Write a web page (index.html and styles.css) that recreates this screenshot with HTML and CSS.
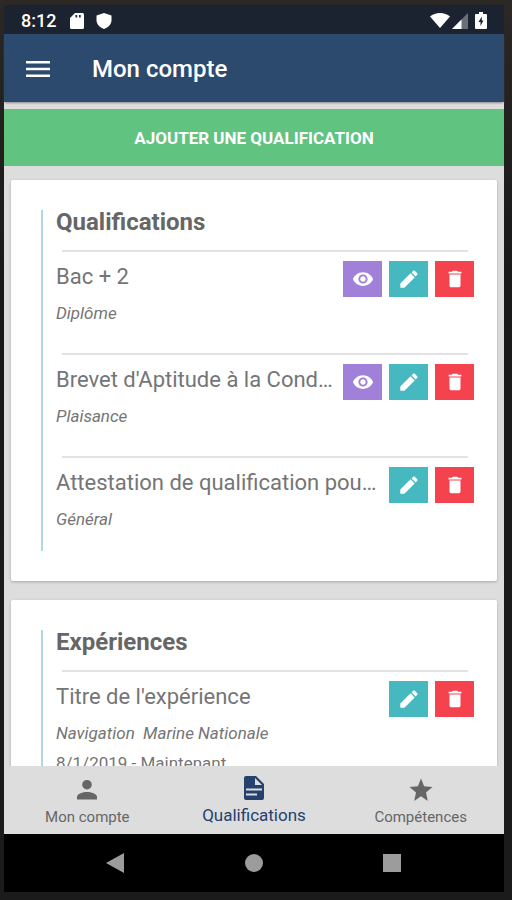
FILE: index.html
```html
<!DOCTYPE html>
<html lang="fr">
<head>
<meta charset="utf-8">
<meta name="viewport" content="width=device-width, initial-scale=1">
<title>Mon compte</title>
<link rel="stylesheet" href="styles.css">
</head>
<body>
<svg class="sprite" aria-hidden="true">
  <symbol id="eye" viewBox="0 0 24 24"><path d="M12 4.500C7 4.500 2.730 7.610 1 12c1.730 4.390 6 7.500 11 7.500s9.270-3.110 11-7.500c-1.730-4.390-6-7.500-11-7.500zM12 17c-2.760 0-5-2.240-5-5s2.240-5 5-5 5 2.240 5 5-2.240 5-5 5zm0-8c-1.660 0-3 1.340-3 3s1.340 3 3 3 3-1.340 3-3-1.340-3-3-3z"/></symbol>
  <symbol id="pencil" viewBox="0 0 24 24"><path d="M2.500 17v4.500H7L18.200 10.300l-4.500-4.500zM21 7.400a1.200 1.200 0 0 0 0-1.700L18.300 3a1.200 1.200 0 0 0-1.700 0l-1.800 1.800 4.500 4.500z"/></symbol>
  <symbol id="trash" viewBox="0 0 24 24"><path d="M6 19c0 1.100.9 2 2 2h8c1.100 0 2-.9 2-2V7H6v12zM19 4h-3.500l-1-1h-5l-1 1H5v2h14V4z"/></symbol>
</svg>
<div class="screen">
  <div class="status">
    <span class="clock">8:12</span>
    <svg class="status-sd" viewBox="0 0 14 16"><path fill="#fff" fill-rule="evenodd" d="M5 0h7.500Q14 0 14 1.500v13Q14 16 12.500 16h-11Q0 16 0 14.500V5zM5.500 2v2.500h1.700V2zM9 2v2.500h1.700V2z"/></svg>
    <svg class="status-shield" viewBox="0 0 16 16"><path fill="#fff" d="M8 0l7.500 2.600V7c0 4-3 7.500-7.500 9C3.500 14.500.5 11 .5 7V2.600z"/></svg>
    <span class="spacer"></span>
    <svg class="status-wifi" viewBox="0 0 20 15"><path fill="#fff" d="M10 15L0 3.500Q4 0 10 0t10 3.500z"/></svg>
    <svg class="status-signal" viewBox="0 0 16 16"><path fill="#687078" d="M0 16L16 0v16z"/><path fill="#fff" d="M0 16L9.500 6.500V16z"/></svg>
    <svg class="status-battery" viewBox="0 0 12 17"><path fill="#fff" d="M4 0h4v2h3q1 0 1 1v13q0 1-1 1H1q-1 0-1-1V3q0-1 1-1h3z"/><path fill="#1b2230" d="M6.800 4.500L3.500 10h2v4L8.500 8.500H6.800z"/></svg>
  </div>
  <header class="appbar">
    <button class="menu" type="button" aria-label="Menu"><svg viewBox="0 0 24 18"><path d="M0 1h24v2.600H0zM0 7.700h24v2.600H0zM0 14.400h24V17H0z"/></svg></button>
    <h1>Mon compte</h1>
  </header>
  <main>
    <button class="add" type="button">AJOUTER UNE QUALIFICATION</button>
    <section class="card">
      <div class="timeline">
        <h2>Qualifications</h2>
        <article class="item">
          <div class="row">
            <h3>Bac + 2</h3>
            <button class="action view" type="button" aria-label="Voir"><svg><use href="#eye"/></svg></button>
            <button class="action edit" type="button" aria-label="Modifier"><svg><use href="#pencil"/></svg></button>
            <button class="action delete" type="button" aria-label="Supprimer"><svg><use href="#trash"/></svg></button>
          </div>
          <p class="kind">Diplôme</p>
        </article>
        <article class="item">
          <div class="row">
            <h3>Brevet d'Aptitude à la Cond…</h3>
            <button class="action view" type="button" aria-label="Voir"><svg><use href="#eye"/></svg></button>
            <button class="action edit" type="button" aria-label="Modifier"><svg><use href="#pencil"/></svg></button>
            <button class="action delete" type="button" aria-label="Supprimer"><svg><use href="#trash"/></svg></button>
          </div>
          <p class="kind">Plaisance</p>
        </article>
        <article class="item">
          <div class="row">
            <h3>Attestation de qualification pou…</h3>
            <button class="action edit" type="button" aria-label="Modifier"><svg><use href="#pencil"/></svg></button>
            <button class="action delete" type="button" aria-label="Supprimer"><svg><use href="#trash"/></svg></button>
          </div>
          <p class="kind">Général</p>
        </article>
      </div>
    </section>
    <section class="card">
      <div class="timeline">
        <h2>Expériences</h2>
        <article class="item">
          <div class="row">
            <h3>Titre de l'expérience</h3>
            <button class="action edit" type="button" aria-label="Modifier"><svg><use href="#pencil"/></svg></button>
            <button class="action delete" type="button" aria-label="Supprimer"><svg><use href="#trash"/></svg></button>
          </div>
          <p class="kind">Navigation&nbsp; Marine Nationale</p>
          <p class="date">8/1/2019 - Maintenant</p>
        </article>
      </div>
    </section>
  </main>
  <nav class="tabs">
    <a href="#compte"><svg viewBox="0 0 24 24"><path d="M12 11.500a4.800 4.800 0 1 0 0-9.600 4.800 4.800 0 0 0 0 9.600zM12 14c-4 0-10 1.500-10 5v2.500h20V19c0-3.500-6-5-10-5z"/></svg><span>Mon compte</span></a>
    <a class="active" href="#qualifications"><svg viewBox="0 0 24 24"><path fill-rule="evenodd" d="M4 0h10l8 8v14q0 2-2 2H4q-2 0-2-2V2q0-2 2-2zM13 2v7h7zM4 12.500v2h16v-2zM4 17.500v2h11v-2z"/></svg><span>Qualifications</span></a>
    <a href="#competences"><svg viewBox="0 0 24 24"><path d="M12 18.200L18.800 23 17 14.600 23.500 9l-8.400-.8L12 .5 8.900 8.200.5 9 7 14.600 5.200 23z"/></svg><span>Compétences</span></a>
  </nav>
  <div class="system">
    <button type="button" aria-label="Retour"><svg viewBox="0 0 20 20"><path d="M18 0v20L0 10z"/></svg></button>
    <button type="button" aria-label="Accueil"><svg viewBox="0 0 20 20"><circle cx="10" cy="10" r="9"/></svg></button>
    <button type="button" aria-label="Applications récentes"><svg viewBox="0 0 20 20"><path d="M1 1h18v18H1z"/></svg></button>
  </div>
</div>
</body>
</html>
```

FILE: styles.css
```css
* {
  box-sizing: border-box;
}

body {
  margin: 0;
  height: 100vh;
  padding: 5px 8px 8px 4px;
  background: linear-gradient(#2b2826, #191919 30%, #1b1b1b);
  font-family: Roboto, sans-serif;
  color: #757575;
}

h1, h2, h3, p {
  margin: 0;
}

button {
  border: 0;
  padding: 0;
  font: inherit;
  color: inherit;
  background: none;
}

svg {
  display: block;
  fill: currentColor;
}

.sprite {
  display: none;
}

.screen {
  height: 100%;
  display: flex;
  flex-direction: column;
  background: #dddddd;
}

.status {
  flex: none;
  height: 29px;
  display: flex;
  align-items: center;
  padding: 2px 17px 0;
  background: #1b2230;
  color: #fff;
}

.clock {
  font-size: 18px;
  font-weight: 500;
  margin-right: 14px;
}

.spacer {
  flex: 1;
}

.status-sd {
  width: 14px;
  height: 16px;
  margin-right: 12px;
}

.status-shield {
  width: 16px;
  height: 16px;
}

.status-wifi {
  width: 20px;
  height: 15px;
  margin-right: 2px;
}

.status-signal {
  width: 16px;
  height: 16px;
  margin-right: 7px;
}

.status-battery {
  width: 12px;
  height: 17px;
}

.appbar {
  flex: none;
  height: 68px;
  display: flex;
  align-items: center;
  gap: 42px;
  padding: 2px 22px 0;
  background: #2c4a6e;
  color: #fff;
  box-shadow: 0 2px 2px -1px #8a8a8f;
}

.menu svg {
  width: 24px;
  height: 18px;
}

.appbar h1 {
  font-size: 24px;
  font-weight: 500;
}

main {
  flex: 1;
  min-height: 0;
  overflow: hidden;
  padding-top: 7px;
}

.add {
  display: block;
  width: 100%;
  height: 57px;
  background: #60c380;
  color: #fff;
  font-size: 17px;
  font-weight: 700;
}

.card {
  margin: 14px 7px 19px;
  padding: 30px 23px 30px 30px;
  background: #fff;
  border-radius: 2px;
  box-shadow: 0 1px 3px #a8a8a8;
}

.timeline {
  display: flex;
  flex-direction: column;
  gap: 8px;
  padding-left: 13px;
  border-left: 2px solid #b0d8df;
}

h2 {
  margin-bottom: 8px;
  font-size: 24px;
  line-height: 24px;
  font-weight: 700;
  color: #666;
}

.item {
  padding-bottom: 22px;
}

.item::before {
  content: "";
  display: block;
  height: 2px;
  margin: 0 6px 9px;
  background: #e2e2e2;
}

.row {
  display: flex;
  align-items: flex-start;
  gap: 7px;
}

h3 {
  flex: 1;
  min-width: 0;
  white-space: nowrap;
  font-size: 22px;
  line-height: 32px;
  font-weight: 400;
}

.action {
  flex: none;
  width: 39px;
  height: 36px;
  display: grid;
  place-items: center;
  color: #fff;
}

.action svg {
  width: 22px;
  height: 22px;
}

.view {
  background: #a180da;
}

.edit {
  background: #45b8c0;
}

.delete {
  background: #f5424f;
}

.kind {
  margin-top: 6px;
  font-size: 17px;
  line-height: 20px;
  font-style: italic;
}

.date {
  margin-top: 10px;
  font-size: 17px;
  line-height: 20px;
}

.tabs {
  flex: none;
  height: 68px;
  display: grid;
  grid-template-columns: repeat(3, 1fr);
  background: #dddddd;
}

.tabs a {
  display: flex;
  flex-direction: column;
  align-items: center;
  padding-top: 12px;
  gap: 5px;
  color: #666;
  font-size: 15px;
  line-height: 20px;
  text-decoration: none;
}

.tabs svg {
  width: 24px;
  height: 24px;
}

.tabs .active {
  padding-top: 10px;
  color: #24426d;
  font-size: 17px;
}

.system {
  flex: none;
  height: 58px;
  display: flex;
  align-items: center;
  justify-content: center;
  gap: 118px;
  background: #000;
  color: #9c9c9c;
}

.system svg {
  width: 20px;
  height: 20px;
}
```
